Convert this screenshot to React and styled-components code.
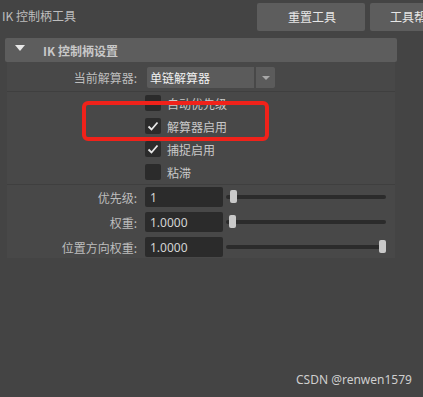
import React from "react";
import styled, { createGlobalStyle } from "styled-components";

const GlobalStyle = createGlobalStyle`
  html, body {
    margin: 0;
    padding: 0;
    background: #444444;
  }
  body {
    font-family: "Noto Sans CJK SC", "Noto Sans", sans-serif;
    font-size: 12px;
    color: #bdbdbd;
  }
`;

const Page = styled.div`
  position: relative;
  width: 423px;
  height: 397px;
  overflow: hidden;
  background: #444444;
`;

const TopBar = styled.div`
  display: flex;
  align-items: center;
  height: 32px;
  padding-top: 1px;
  box-sizing: border-box;
`;

const Title = styled.div`
  width: 255px;
  flex-shrink: 0;
  padding-left: 2px;
  color: #bdbdbd;
  line-height: 16px;
  margin-top: -2px;
`;

const ToolButton = styled.div`
  flex-shrink: 0;
  width: 108px;
  height: 28px;
  margin-right: 5px;
  border-radius: 2px;
  background: #5d5d5d;
  color: #e6e6e6;
  display: flex;
  align-items: center;
  justify-content: ${({ start }) => (start ? "flex-start" : "center")};
  padding-left: ${({ start }) => (start ? 20 : 2)}px;
  box-sizing: border-box;
  white-space: nowrap;
`;

const Frame = styled.div`
  margin: 6px 0 0 5px;
  width: 392px;
`;

const FrameHeader = styled.div`
  height: 24px;
  border-radius: 2px;
  background: #5d5d5d;
  display: flex;
  align-items: center;
  padding-left: 10px;
  box-sizing: border-box;
  color: #c8c8c8;
  font-weight: bold;
`;

const Triangle = styled.span`
  width: 0;
  height: 0;
  border-left: 5px solid transparent;
  border-right: 5px solid transparent;
  border-top: 6px solid #e8e8e8;
  margin-right: 18px;
  margin-top: -4px;
`;

const FrameBody = styled.div`
  margin: 0 2px;
  background: #484848;
  padding-bottom: 1px;
`;

const Section = styled.div`
  display: flex;
  flex-direction: column;
  gap: ${({ gap }) => gap || 0}px;
  padding: ${({ pad }) => pad};
  border-bottom: ${({ last }) => (last ? "none" : "1px solid #3f3f3f")};
`;

const Row = styled.div`
  display: flex;
  align-items: center;
  height: ${({ h }) => h || 20}px;
`;

const Label = styled.div`
  width: 130px;
  flex-shrink: 0;
  text-align: right;
  color: #bdbdbd;
  padding-right: 8px;
  box-sizing: content-box;
`;

const Spacer = styled.div`
  width: 138px;
  flex-shrink: 0;
`;

const Select = styled.div`
  display: flex;
  gap: 2px;
  margin-left: 2px;
  height: 21px;
`;

const SelectValue = styled.div`
  width: 107px;
  background: #5b5b5b;
  border-radius: 2px 0 0 2px;
  color: #f0f0f0;
  display: flex;
  align-items: center;
  padding-left: 3px;
  box-sizing: border-box;
`;

const SelectArrow = styled.div`
  width: 19px;
  background: #5b5b5b;
  border-radius: 0 2px 2px 0;
  display: flex;
  align-items: center;
  justify-content: center;

  &::after {
    content: "";
    border-left: 4px solid transparent;
    border-right: 4px solid transparent;
    border-top: 4px solid #a8a8a8;
  }
`;

const Box = styled.div`
  width: 16px;
  height: 16px;
  border-radius: 2px;
  background: #2b2b2b;
  flex-shrink: 0;
  display: flex;
  align-items: center;
  justify-content: center;
`;

const CheckText = styled.span`
  margin-left: 6px;
  color: #c8c8c8;
`;

const NumInput = styled.div`
  width: 78px;
  height: 20px;
  background: #2b2b2b;
  border-radius: 2px;
  color: #d4d4d4;
  display: flex;
  align-items: center;
  padding-left: 5px;
  box-sizing: border-box;
  font-family: "Noto Sans", sans-serif;
`;

const Track = styled.div`
  position: relative;
  margin-left: 3px;
  width: 160px;
  height: 4px;
  border-radius: 2px;
  background: #2b2b2b;
`;

const Handle = styled.div`
  position: absolute;
  top: -5px;
  width: 7px;
  height: 13px;
  border-radius: 2px;
  background: #c9c9c9;
`;

const RedMark = styled.div`
  position: absolute;
  left: 82px;
  top: 101px;
  width: 187px;
  height: 40px;
  box-sizing: border-box;
  border: 4px solid #f0221a;
  border-radius: 6px;
`;

const Watermark = styled.div`
  position: absolute;
  left: 296px;
  top: 371px;
  font-family: "Noto Sans", sans-serif;
  font-size: 12px;
  color: #cfcfcf;
`;

const Check = () => (
  <svg width="12" height="12" viewBox="0 0 12 12">
    <path d="M1.5 6.5 L4.5 9.5 L10.5 2.5" fill="none" stroke="#e8e8e8" strokeWidth="1.8" />
  </svg>
);

const checks = [
  { text: "自动优先级", on: false },
  { text: "解算器启用", on: true },
  { text: "捕捉启用", on: true },
  { text: "粘滞", on: false },
];

const sliders = [
  { label: "优先级:", value: "1", pos: 4 },
  { label: "权重:", value: "1.0000", pos: 3 },
  { label: "位置方向权重:", value: "1.0000", pos: 153 },
];

export default function App() {
  return (
    <Page>
      <GlobalStyle />
      <TopBar>
        <Title>IK 控制柄工具</Title>
        <ToolButton>重置工具</ToolButton>
        <ToolButton start>工具帮助</ToolButton>
      </TopBar>
      <Frame>
        <FrameHeader>
          <Triangle />
          IK 控制柄设置
        </FrameHeader>
        <FrameBody>
          <Section pad="5px 0 3px">
            <Row h={21}>
              <Label>当前解算器:</Label>
              <Select>
                <SelectValue>单链解算器</SelectValue>
                <SelectArrow />
              </Select>
            </Row>
          </Section>
          <Section pad="3px 0 4px" gap={7}>
            {checks.map((c) => (
              <Row key={c.text} h={16}>
                <Spacer />
                <Box>{c.on && <Check />}</Box>
                <CheckText>{c.text}</CheckText>
              </Row>
            ))}
          </Section>
          <Section pad="2px 0 0" gap={5} last>
            {sliders.map((s) => (
              <Row key={s.label} h={20}>
                <Label>{s.label}</Label>
                <NumInput>{s.value}</NumInput>
                <Track>
                  <Handle style={{ left: s.pos }} />
                </Track>
              </Row>
            ))}
          </Section>
        </FrameBody>
      </Frame>
      <RedMark />
      <Watermark>CSDN @renwen1579</Watermark>
    </Page>
  );
}
